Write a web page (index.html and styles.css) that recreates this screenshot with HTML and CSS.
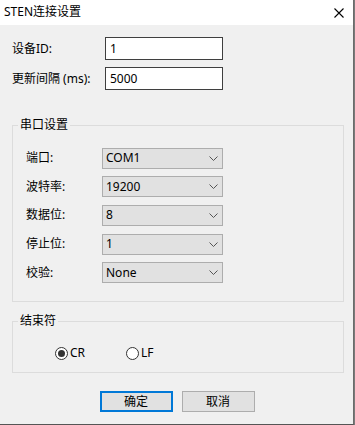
FILE: index.html
```html
<!DOCTYPE html>
<html lang="zh-CN">
<head>
    <meta charset="UTF-8">
    <meta name="viewport" content="width=device-width, initial-scale=1.0">
    <title>STEN连接设置</title>
    <link rel="stylesheet" href="styles.css">
</head>
<body>
    <div class="window">
        <div class="titlebar">
            <span class="title">STEN连接设置</span>
            <span class="close-btn">
                <svg width="10" height="10" viewBox="0 0 10 10"><path d="M0.5 0.5 L9.5 9.5 M9.5 0.5 L0.5 9.5" stroke="#000" stroke-width="1.1" fill="none"/></svg>
            </span>
        </div>
        <div class="dialog-body">
            <div class="form-grid">
                <label class="field-label">设备ID:</label>
                <div class="text-input">1</div>
                <label class="field-label">更新间隔 (ms):</label>
                <div class="text-input">5000</div>
            </div>

            <fieldset class="group group-serial">
                <legend>串口设置</legend>
                <div class="combo-grid">
                    <label class="field-label">端口:</label>
                    <div class="combo"><span>COM1</span><svg class="chevron" width="9" height="5" viewBox="0 0 9 5"><path d="M0.5 0.5 L4.5 4.5 L8.5 0.5" stroke="#555" fill="none"/></svg></div>
                    <label class="field-label">波特率:</label>
                    <div class="combo"><span>19200</span><svg class="chevron" width="9" height="5" viewBox="0 0 9 5"><path d="M0.5 0.5 L4.5 4.5 L8.5 0.5" stroke="#555" fill="none"/></svg></div>
                    <label class="field-label">数据位:</label>
                    <div class="combo"><span>8</span><svg class="chevron" width="9" height="5" viewBox="0 0 9 5"><path d="M0.5 0.5 L4.5 4.5 L8.5 0.5" stroke="#555" fill="none"/></svg></div>
                    <label class="field-label">停止位:</label>
                    <div class="combo"><span>1</span><svg class="chevron" width="9" height="5" viewBox="0 0 9 5"><path d="M0.5 0.5 L4.5 4.5 L8.5 0.5" stroke="#555" fill="none"/></svg></div>
                    <label class="field-label">校验:</label>
                    <div class="combo"><span>None</span><svg class="chevron" width="9" height="5" viewBox="0 0 9 5"><path d="M0.5 0.5 L4.5 4.5 L8.5 0.5" stroke="#555" fill="none"/></svg></div>
                </div>
            </fieldset>

            <fieldset class="group group-end">
                <legend>结束符</legend>
                <div class="radio-row">
                    <div class="radio-item">
                        <span class="radio checked"></span>
                        <span class="radio-label">CR</span>
                    </div>
                    <div class="radio-item">
                        <span class="radio"></span>
                        <span class="radio-label">LF</span>
                    </div>
                </div>
            </fieldset>

            <div class="button-row">
                <div class="btn btn-default">确定</div>
                <div class="btn">取消</div>
            </div>
        </div>
    </div>
</body>
</html>
```

FILE: styles.css
```css
* {
    margin: 0;
    padding: 0;
    box-sizing: border-box;
}
body {
    background-color: #7a7a7a;
    font-family: "Noto Sans", "Noto Sans CJK SC", sans-serif;
    font-size: 12px;
    line-height: 16px;
    color: #000;
    width: 355px;
    height: 425px;
    overflow: hidden;
}
.window {
    width: 354px;
    height: 425px;
    background-color: #f0f0f0;
    border-right: 1px solid #6b6b6b;
    border-bottom: 1px solid #555;
}
.titlebar {
    height: 25px;
    background-color: #fff;
    display: flex;
    align-items: center;
    justify-content: space-between;
    padding-left: 4px;
    padding-right: 9px;
}
.title {
    font-size: 12px;
    padding-bottom: 1px;
}
.close-btn {
    display: flex;
    width: 10px;
    height: 10px;
}
.dialog-body {
    padding: 12px 9px 0 12px;
}
.form-grid {
    display: grid;
    grid-template-columns: 93px 118px;
    row-gap: 7px;
    align-items: center;
}
.field-label {
    white-space: nowrap;
}
.text-input {
    height: 23px;
    background-color: #fff;
    border: 1px solid #3f3f3f;
    padding-left: 4px;
    line-height: 21px;
}
.group {
    border: 1px solid #dcdcdc;
    padding: 0;
}
.group legend {
    margin-left: 5px;
    padding: 0 2px;
    line-height: 16px;
}
.group-serial {
    margin-top: 27px;
}
.combo-grid {
    display: grid;
    grid-template-columns: 76px 121px;
    row-gap: 7.7px;
    align-items: center;
    padding: 14.5px 0 18px 13px;
}
.combo {
    height: 21px;
    background-color: #e1e1e1;
    border: 1px solid #adadad;
    display: flex;
    align-items: center;
    justify-content: space-between;
    padding-left: 3px;
    padding-right: 4px;
}
.chevron {
    display: block;
}
.group-end {
    margin-top: 11px;
}
.radio-row {
    display: flex;
    height: 14px;
    align-items: center;
    box-sizing: content-box;
    padding: 17px 0 12px 42px;
}
.radio-item {
    display: flex;
    align-items: center;
    gap: 2px;
    width: 71px;
}
.radio {
    width: 13px;
    height: 13px;
    border-radius: 50%;
    border: 1px solid #333;
    background-color: #fff;
    display: flex;
    align-items: center;
    justify-content: center;
}
.radio.checked::after {
    content: "";
    width: 7px;
    height: 7px;
    border-radius: 50%;
    background-color: #333;
}
.button-row {
    margin-top: 18px;
    display: flex;
    justify-content: center;
    gap: 9px;
    padding-right: 2px;
}
.btn {
    width: 73px;
    height: 21px;
    background-color: #e1e1e1;
    border: 1px solid #adadad;
    display: flex;
    align-items: center;
    justify-content: center;
}
.btn-default {
    border: 2px solid #0078d7;
}
```
